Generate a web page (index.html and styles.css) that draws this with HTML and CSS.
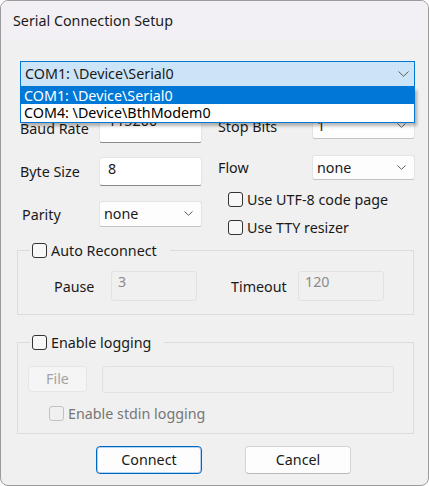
FILE: index.html
```html
<!DOCTYPE html>
<html>
<head>
<meta charset="utf-8">
<link rel="stylesheet" href="styles.css">
</head>
<body>
<div class="window">
  <div class="titlebar">Serial Connection Setup</div>
  <div class="content">
    <div class="combo-wrap">
      <div class="combo">
        <span>COM1: \Device\Serial0</span>
        <svg class="chev" width="11" height="6" viewBox="0 0 11 6"><polyline points="0.5,0.5 5.5,5.2 10.5,0.5" fill="none" stroke="#5f5f5f" stroke-width="1"/></svg>
      </div>
      <ul class="dropdown">
        <li class="active">COM1: \Device\Serial0</li>
        <li>COM4: \Device\BthModem0</li>
      </ul>
    </div>

    <div class="form">
      <div class="col col-left">
        <div class="field f-baud">
          <span class="label">Baud Rate</span>
          <div class="input tall">115200</div>
        </div>
        <div class="field f-byte">
          <span class="label">Byte Size</span>
          <div class="input tall">8</div>
        </div>
        <div class="field f-parity">
          <span class="label parity-label">Parity</span>
          <div class="select">
            <span>none</span>
            <svg class="chev" width="9" height="5" viewBox="0 0 9 5"><polyline points="0.5,0.5 4.5,4.3 8.5,0.5" fill="none" stroke="#5f5f5f" stroke-width="1"/></svg>
          </div>
        </div>
      </div>
      <div class="col col-right">
        <div class="field f-stop">
          <span class="label rlabel">Stop Bits</span>
          <div class="select s-stop">
            <span>1</span>
            <svg class="chev" width="9" height="5" viewBox="0 0 9 5"><polyline points="0.5,0.5 4.5,4.3 8.5,0.5" fill="none" stroke="#5f5f5f" stroke-width="1"/></svg>
          </div>
        </div>
        <div class="field f-flow">
          <span class="label rlabel">Flow</span>
          <div class="select s-flow">
            <span>none</span>
            <svg class="chev" width="9" height="5" viewBox="0 0 9 5"><polyline points="0.5,0.5 4.5,4.3 8.5,0.5" fill="none" stroke="#5f5f5f" stroke-width="1"/></svg>
          </div>
        </div>
        <div class="check c-utf"><span class="cb"></span><span>Use UTF-8 code page</span></div>
        <div class="check c-tty"><span class="cb"></span><span>Use TTY resizer</span></div>
      </div>
    </div>

    <fieldset class="group g-reconnect">
      <legend><span class="cb"></span><span>Auto Reconnect</span></legend>
      <div class="reconnect-row">
        <span class="label l-pause">Pause</span>
        <div class="input disabled">3</div>
        <span class="label l-timeout">Timeout</span>
        <div class="input disabled">120</div>
      </div>
    </fieldset>

    <fieldset class="group g-logging">
      <legend><span class="cb"></span><span>Enable logging</span></legend>
      <div class="file-row">
        <div class="btn-file">File</div>
        <div class="input disabled file-path"></div>
      </div>
      <div class="check c-stdin"><span class="cb cb-disabled"></span><span>Enable stdin logging</span></div>
    </fieldset>

    <div class="buttons">
      <div class="btn btn-default">Connect</div>
      <div class="btn">Cancel</div>
    </div>
  </div>
</div>
</body>
</html>
```

FILE: styles.css
```css
* { box-sizing: border-box; }
html, body {
  margin: 0;
  padding: 0;
  background: #ffffff;
}
body {
  font-family: "Noto Sans", "Open Sans", sans-serif;
  font-size: 14.3px;
  color: #1a1a1a;
}
.window {
  width: 429px;
  height: 486px;
  border: 1px solid #9b9b9b;
  border-radius: 8px;
  overflow: hidden;
  background: #f0f0f0;
}
.titlebar {
  height: 39px;
  background: #f3f0f5;
  padding-left: 12px;
  line-height: 40px;
  color: #1b1b1b;
}
.content {
  padding: 21px 13px 0 16px;
}
.combo-wrap {
  position: relative;
  margin-left: 3px;
}
.combo {
  height: 26px;
  border: 1px solid #0078d4;
  background: #cce4f7;
  display: flex;
  align-items: center;
  justify-content: space-between;
  padding: 0 5px 1px 4px;
  line-height: 17px;
}
.dropdown {
  position: absolute;
  left: 0;
  right: 0;
  top: 26px;
  margin: 0;
  padding: 0 0 1px;
  list-style: none;
  background: #ffffff;
  border: 1px solid #0078d7;
  border-top: 0;
  box-shadow: 2px 3px 3px rgba(0,0,0,0.28);
  z-index: 5;
}
.dropdown li {
  height: 17px;
  line-height: 17px;
  padding-left: 3px;
  color: #000;
}
.dropdown li.active {
  background: #0078d7;
  color: #ffffff;
}
.form {
  margin-top: 26px;
  margin-left: 3px;
  display: flex;
  gap: 15px;
}
.col {
  display: flex;
  flex-direction: column;
}
.col-left { width: 182px; }
.col-right { width: 198px; }
.field {
  display: flex;
  align-items: center;
}
.label { line-height: 17px; }
.col-left .label { width: 79px; }
.parity-label { padding-left: 2px; }
.rlabel { width: 95px; padding-left: 1px; }
.f-byte { margin-top: 14px; }
.f-parity { margin-top: 15px; }
.f-flow { margin-top: 16px; }
.input {
  width: 103px;
  background: #ffffff;
  border: 1px solid #e5e5e5;
  border-bottom: 1px solid #8a8a8a;
  border-radius: 3px;
  padding: 2px 8px 0;
  line-height: 17px;
}
.input.tall { height: 30px; }
.f-byte .input { height: 29px; }
.f-baud .input { padding-top: 0; line-height: 14px; }
.select {
  width: 103px;
  height: 26px;
  background: #fdfdfd;
  border: 1px solid #e3e3e3;
  border-bottom-color: #c4c4c4;
  border-radius: 3px;
  display: flex;
  align-items: center;
  justify-content: space-between;
  padding: 0 8px 1px 4px;
}
.s-flow { height: 25px; }
.check {
  display: flex;
  align-items: center;
  line-height: 17px;
}
.cb {
  display: inline-block;
  width: 15px;
  height: 15px;
  border: 1px solid #333333;
  border-radius: 3px;
  background: #f7f7f7;
  margin-right: 4px;
  flex: none;
}
.c-utf { margin-top: 11px; margin-left: 11px; }
.c-tty { margin-top: 11px; margin-left: 11px; }
.group {
  margin: 6px 0 0 0;
  padding: 0;
  width: 397px;
  border: 1px solid #dcdcdc;
  min-width: 0;
}
.group legend {
  display: flex;
  align-items: center;
  line-height: 17px;
  margin-left: 12px;
  padding: 0 13px 0 2px;
}
.reconnect-row {
  display: flex;
  align-items: center;
  padding: 12px 0 13px 36px;
}
.l-pause { width: 57px; }
.l-timeout { width: 67px; margin-left: 34px; }
.input.disabled {
  width: 86px;
  height: 30px;
  background: #f0f0f0;
  border: 1px solid #e2e2e2;
  color: #8c8c8c;
  padding: 3px 6px 0;
  line-height: 14px;
}
.g-logging { margin-top: 19px; }
.file-row {
  display: flex;
  padding: 15px 0 0 10px;
  gap: 15px;
}
.btn-file {
  width: 59px;
  height: 26px;
  background: #f5f5f5;
  border: 1px solid #e6e6e6;
  border-radius: 4px;
  color: #a3a3a3;
  text-align: center;
  line-height: 23px;
}
.input.disabled.file-path {
  width: 292px;
  height: 27px;
}
.c-stdin {
  margin: 12px 0 11px 31px;
  color: #767676;
}
.cb-disabled {
  border-color: #c2c2c2;
  background: #f0f0f0;
}
.buttons {
  display: flex;
  gap: 43px;
  margin: 12px 0 0 79px;
}
.btn {
  width: 106px;
  height: 28px;
  border: 1px solid #d3d3d3;
  border-bottom-color: #b9b9b9;
  border-radius: 4px;
  background: #fdfdfd;
  text-align: center;
  line-height: 25px;
}
.btn-default {
  border: 1px solid #0067c0;
  box-shadow: inset 0 0 0 1px #b3d4f0;
}
```
